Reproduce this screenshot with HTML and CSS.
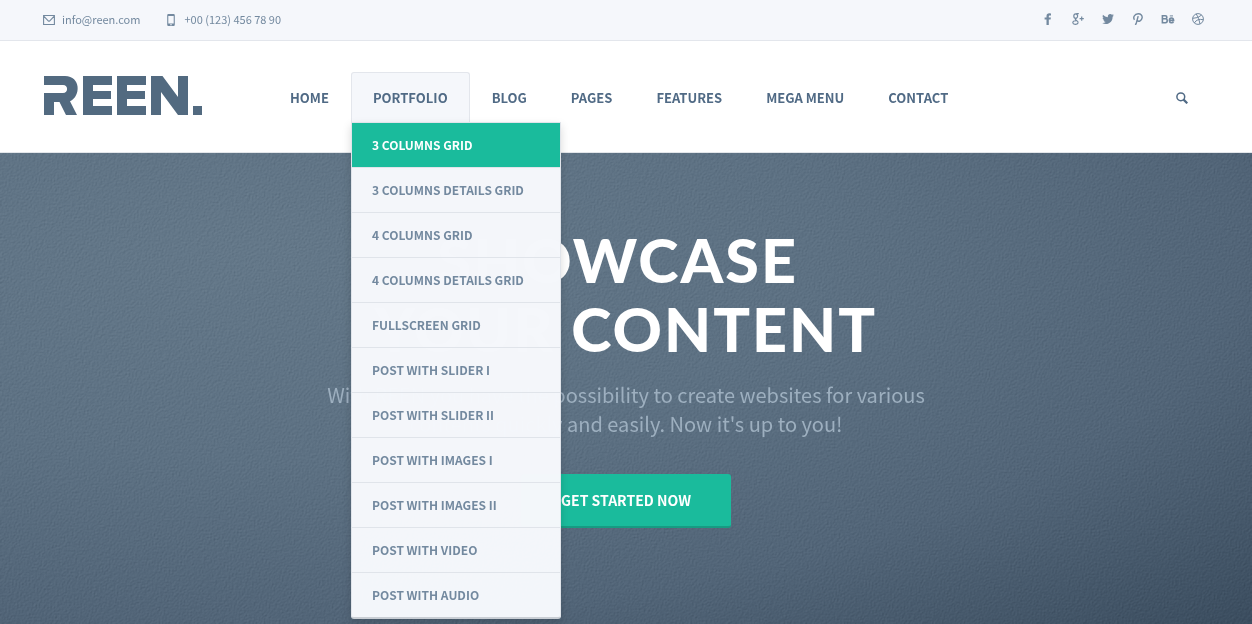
FILE: index.html
```html
<!DOCTYPE html>
<html lang="en">
<head>
<meta charset="utf-8">
<meta name="viewport" content="width=device-width, initial-scale=1">
<title>REEN</title>
<link rel="stylesheet" href="styles.css">
</head>
<body>
<header class="header">
  <div class="topbar">
    <div class="container topbar-row">
      <ul class="contact">
        <li><a href="#"><svg class="icon" viewBox="0 0 12 12" aria-hidden="true"><path d="M.6 1.500h10.800v9H.6zM1 2.400l4.200 4.400q.8.700 1.600 0L11 2.400" fill="none" stroke="currentColor" stroke-width="1.100"/></svg><span>info@reen.com</span></a></li>
        <li><a href="#"><svg class="icon" viewBox="0 0 12 12" aria-hidden="true"><path fill="currentColor" fill-rule="evenodd" d="M3.400 0h5.200q1.200 0 1.200 1.200v9.600q0 1.200-1.200 1.200H3.400q-1.200 0-1.200-1.200V1.200Q2.200 0 3.400 0zM3.300 1.900v7.600h5.400V1.900zM5.200 10.300v1h1.600v-1z"/></svg><span>+00 (123) 456 78 90</span></a></li>
      </ul>
      <ul class="social">
        <li><a href="#" aria-label="Facebook"><svg class="icon" viewBox="0 0 12 12"><path fill="currentColor" d="M4.500 12V6.600H2.600V4.500h1.900V3.200C4.500 1.200 5.600.3 7.300.3q1 0 1.700.1v2H7.900c-.9 0-1.100.4-1.100 1.100v1h2.100l-.3 2.100H6.800V12z"/></svg></a></li>
        <li><a href="#" aria-label="Google Plus"><svg class="icon" viewBox="0 0 12 12"><g fill="none" stroke="currentColor" stroke-width="1.200"><ellipse cx="3.700" cy="3.100" rx="1.900" ry="2.300"/><path d="M4.300.7h2.500M4.200 5.400c-1.500.8-.8 1.500.4 2.200 1.400.8 1.700 1.500 1.400 2.400-.7 1.800-5 1.800-5.200-.2C.7 8 2.800 7.600 4.600 7.600M7.600 5.600h4.200M9.700 3.500v4.200"/></g></svg></a></li>
        <li><a href="#" aria-label="Twitter"><svg class="icon" viewBox="0 0 12 12"><path fill="currentColor" d="M11.800 2.500q-.5.800-1.200 1.300c.2 4.300-3 7.300-6.700 7.300Q1.800 11.100.2 10q1.900.2 3.500-1-1.700-.1-2.300-1.700h1Q.6 6.700.500 4.800l1.100.3Q0 3.800.9 1.700q2 2.400 5 2.600C5.400 2.500 6.600 1 8.200 1q1 0 1.800.8l1.500-.6q-.2.800-1 1.400z"/></svg></a></li>
        <li><a href="#" aria-label="Pinterest"><svg class="icon" viewBox="0 0 12 12"><path fill="none" stroke="currentColor" stroke-width="1.400" d="M2.500 6.700C.8 4.700 2.300.8 6.200.8c2.700 0 4.300 1.700 3.900 4.100C9.600 8.200 6.400 9 5.100 7.300M6.200 3.100 4.300 10q-.3 1-1 1.900"/></svg></a></li>
        <li><a href="#" aria-label="Behance"><svg class="icon icon-wide" viewBox="0 0 14 12"><g fill="none" stroke="currentColor" stroke-width="1.600"><path d="M1.400 2.700h2.900c2.100 0 2.100 3.100 0 3.100H1.400h3.100c2.300 0 2.300 3.900 0 3.900H1.400zM8.400 7.400h4.200C12.400 4.200 8.400 4.300 8.400 7.400c0 2.800 3.300 3 4 1.200"/><path d="M8.800 2.900h3.200" stroke-width="1"/></g></svg></a></li>
        <li><a href="#" aria-label="Dribbble"><svg class="icon" viewBox="0 0 12 12"><g fill="none" stroke="currentColor"><circle cx="6" cy="6" r="5.400"/><path d="M4.200.9Q7 4.400 8 11M.7 5.300Q6.500 5.400 9.600 2M2.300 10Q5 5.300 11.300 6.700"/></g></svg></a></li>
      </ul>
    </div>
  </div>
  <div class="container navbar">
    <a class="logo" href="#" aria-label="REEN."><svg viewBox="0 0 158 39" aria-hidden="true"><path fill="currentColor" d="M0 0h21c16 0 16 20.500 5 25.200L33 39H22L15.500 26H10v13H0V17h19c5.500 0 5.500-8 0-8H0zM39 0h29v9H49v6h18v8H49v7h19v9H39zM73 0h29v9H83v6h18v8H83v7h19v9H73zM107 0h11.500L134 21V0h10v39h-10L117 16v23h-10zM149 30h9v9h-9z"/></svg></a>
    <nav class="nav" aria-label="Main">
      <ul class="nav-list">
        <li><a href="#">HOME</a></li>
        <li class="open"><a href="#">PORTFOLIO</a>
          <ul class="dropdown">
            <li class="active"><a href="#">3 COLUMNS GRID</a></li>
            <li><a href="#">3 COLUMNS DETAILS GRID</a></li>
            <li><a href="#">4 COLUMNS GRID</a></li>
            <li><a href="#">4 COLUMNS DETAILS GRID</a></li>
            <li><a href="#">FULLSCREEN GRID</a></li>
            <li><a href="#">POST WITH SLIDER I</a></li>
            <li><a href="#">POST WITH SLIDER II</a></li>
            <li><a href="#">POST WITH IMAGES I</a></li>
            <li><a href="#">POST WITH IMAGES II</a></li>
            <li><a href="#">POST WITH VIDEO</a></li>
            <li><a href="#">POST WITH AUDIO</a></li>
          </ul>
        </li>
        <li><a href="#">BLOG</a></li>
        <li><a href="#">PAGES</a></li>
        <li><a href="#">FEATURES</a></li>
        <li><a href="#">MEGA MENU</a></li>
        <li><a href="#">CONTACT</a></li>
      </ul>
    </nav>
    <button class="search" type="button" aria-label="Search"><svg class="icon" viewBox="0 0 12 12"><circle cx="4.800" cy="4.800" r="3.900" fill="none" stroke="currentColor" stroke-width="1.500"/><path d="M7.600 7.600l3.700 3.700" stroke="currentColor" stroke-width="2.200"/></svg></button>
  </div>
</header>
<main class="hero">
  <svg class="texture" aria-hidden="true"><filter id="paper" x="0" y="0" width="100%" height="100%" color-interpolation-filters="sRGB"><feTurbulence type="fractalNoise" baseFrequency="0.6" numOctaves="3" seed="4"/><feDiffuseLighting lighting-color="#fff" surfaceScale="1" result="lit"><feDistantLight azimuth="225" elevation="30"/></feDiffuseLighting></filter><rect width="100%" height="100%" filter="url(#paper)"/></svg>
  <div class="caption">
    <h1>SHOWCASE&nbsp;<br>YOUR CONTENT</h1>
    <p>With REEN you have the possibility to create websites for various<br>contents quickly and easily. Now it's up to you!</p>
    <a class="button" href="#">GET STARTED NOW</a>
  </div>
</main>
</body>
</html>
```
FILE: styles.css
```css
* { box-sizing: border-box; }
body {
  margin: 0;
  min-height: 100vh;
  display: flex;
  flex-direction: column;
  background: #fff;
  color: #506a85;
  font-family: "Noto Sans CJK SC", "Noto Sans", sans-serif;
}
ul { list-style: none; margin: 0; padding: 0; }
a { color: inherit; text-decoration: none; }
.container { width: 100%; max-width: 1170px; margin: 0 auto; }
.icon { width: 12px; height: 12px; display: block; flex: none; }
.icon-wide { width: 14px; }

.header { position: relative; z-index: 2; border-bottom: 1px solid #e3e6ea; }
.topbar { background: #f5f7fb; border-bottom: 1px solid #e3e6ec; color: #73899f; }
.topbar-row { display: flex; justify-content: space-between; padding: 0 7px 0 2px; }
.contact, .social { display: flex; align-items: center; min-height: 40px; }
.contact { gap: 25px; font-size: 11px; line-height: 20px; }
.contact a { display: flex; align-items: center; gap: 7px; }
.contact span { padding-bottom: 2px; }
.social { gap: 18px; padding-bottom: 2px; }
.social li { width: 12px; display: flex; justify-content: center; }

.navbar { display: flex; align-items: center; padding: 31px 23px 30px 3px; }
.logo { width: 158px; align-self: flex-start; padding-top: 4px; color: #526a80; }
.logo svg { display: block; width: 100%; }
.nav { flex: 1; margin-left: 66px; }
.nav-list { display: flex; }
.nav-list > li { position: relative; }
.nav-list > li > a {
  display: block;
  padding: 14px 21px 13px;
  border: 1px solid transparent;
  border-bottom: 0;
  font-size: 13px;
  line-height: 22px;
  font-weight: 700;
}
.nav-list > .open > a { background: #f5f7fb; border-color: #e3e6ec; border-radius: 3px 3px 0 0; }
.dropdown {
  position: absolute;
  top: 100%;
  left: 0;
  width: 210px;
  background: rgba(245, 247, 251, .992);
  border: 1px solid #e0e4ea;
  border-bottom: 2px solid #c9ced4;
  border-radius: 0 0 3px 3px;
  box-shadow: 0 4px 10px rgba(0, 0, 0, .15);
  color: #73899f;
  font-size: 12px;
  line-height: 20px;
  font-weight: 700;
}
.dropdown a { display: block; padding: 12px 20px; }
.dropdown li + li { border-top: 1px solid #e0e4ea; }
.dropdown .active { background: #1abb9c; color: #fff; }
.search { padding: 2px 0 0; border: 0; background: none; color: #506a85; }

.hero {
  position: relative;
  flex: 1;
  background: radial-gradient(ellipse at 20% 20%, #647889 0%, #5d7183 40%, #526578 70%, #3b4d5f 100%);
  text-align: center;
}
.texture { position: absolute; inset: 0; width: 100%; height: 100%; mix-blend-mode: soft-light; opacity: .2; }
.caption { position: relative; padding: 72px 20px 96px; }
h1 {
  margin: 0;
  color: #fff;
  font: 900 61px/69px Lato, sans-serif;
  letter-spacing: 2px;
}
.caption p { margin: 17px 0 36px; color: #9dafbf; font-size: 20px; line-height: 29px; }
.button {
  display: inline-block;
  padding: 15px 40px;
  border-bottom: 2px solid #179b82;
  border-radius: 3px;
  background: #1abb9c;
  color: #fff;
  font-size: 14px;
  line-height: 22px;
  font-weight: 700;
}
```
